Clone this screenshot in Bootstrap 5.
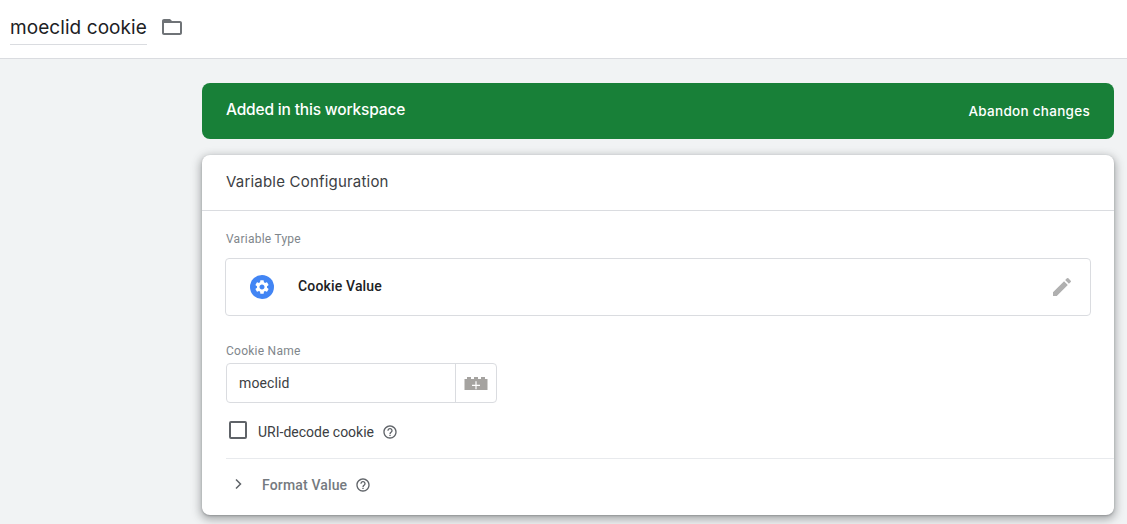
<!DOCTYPE html>
<html lang="en">
<head>
<meta charset="utf-8">
<title>moeclid cookie</title>
<link href="https://cdn.jsdelivr.net/npm/bootstrap@5.3.0/dist/css/bootstrap.min.css" rel="stylesheet">
<style>
html,body{height:524px;overflow:hidden}
body{background:#f1f3f4;font-family:Roboto,"Liberation Sans",sans-serif;color:#202124}
.top-bar{height:59px;background:#fff;border-bottom:1px solid #dadce0;padding-left:10px}
.var-title{font-family:Inter,sans-serif;font-size:19px;line-height:24px;letter-spacing:.07px;color:#202124;border-bottom:1px solid #dadce0;height:31px;padding-top:2px;margin-top:1px}
.folder-ico{margin-left:13px;margin-top:-5px}
.main-col{margin-left:202px;width:912px;padding-top:24px}
.status-bar{height:56px;background:#188038;border-radius:8px;color:#fff;padding:0 24px 2px;font-family:Inter,sans-serif}
.status-text{font-size:15.5px;font-weight:500;letter-spacing:-.17px}
.abandon{font-size:13.5px;font-weight:500;letter-spacing:.28px;margin-top:2px}
.cfg-card{margin-top:16px;height:360px;background:#fff;border-radius:8px;box-shadow:0 1px 2px rgba(60,64,67,.3),0 3px 8px 2px rgba(60,64,67,.38);overflow:hidden}
.cfg-head{height:56px;border-bottom:1px solid #dadce0;padding:0 24px;font-family:Inter,sans-serif;font-size:15px;letter-spacing:.2px;color:#3c4043}
.cfg-body{padding:20px 23px 0}
.fld-label{font-size:12px;line-height:16px;color:#80868b;letter-spacing:.25px;margin-left:1px}
.type-box{height:58px;margin-top:11px;border:1px solid #dadce0;border-radius:4px;padding:0 16px 0 24px}
.type-name{font-size:14px;font-weight:500;margin-left:24px;margin-bottom:2px;color:#202124;letter-spacing:.16px}
.name-label{margin-top:27px}
.input-wrap{margin:4px 0 0 1px;width:271px;height:40px;border:1px solid #dadce0;border-radius:4px}
.input-val{flex:1;padding:0 12px;font-size:14px;color:#3c4043;letter-spacing:.1px}
.input-btn{width:41px;border-left:1px solid #dadce0}
.check-row{margin:18px 0 0 4px;height:18px;font-size:14px;color:#3c4043}
.check-box{width:18px;height:18px;border:2px solid #5f6368;border-radius:2px;margin-right:11px}
.check-text{margin-top:1px}
.help-ico{margin-left:8px}
.check-row .help-ico{margin-top:3px}
.rule{height:1px;background:#e8eaed;margin-top:19px;margin-left:24px}
.fmt-row{height:53px;padding-left:32px;padding-bottom:1px;font-size:14px;font-weight:500;color:#757a80}
.fmt-chevron{margin-top:-2px}
.fmt-text{margin-left:18px;letter-spacing:.15px}
</style>
</head>
<body>
<header class="top-bar d-flex align-items-center">
  <div class="var-title">moeclid cookie</div>
  <svg class="folder-ico" width="24" height="24" viewBox="0 0 24 24" fill="#6f7377" aria-hidden="true"><path d="M20 6h-8l-2-2H4c-1.1 0-2 .9-2 2v12c0 1.1.9 2 2 2h16c1.1 0 2-.9 2-2V8c0-1.100-.9-2-2-2zm0 12H4V8h16v10z"/></svg>
</header>
<main class="main-col">
  <div class="status-bar d-flex align-items-center justify-content-between">
    <span class="status-text">Added in this workspace</span>
    <span class="abandon">Abandon changes</span>
  </div>
  <section class="cfg-card">
    <div class="cfg-head d-flex align-items-center">Variable Configuration</div>
    <div class="cfg-body">
      <div class="fld-label">Variable Type</div>
      <div class="type-box d-flex align-items-center">
        <svg width="24" height="24" viewBox="0 0 24 24" aria-hidden="true"><circle cx="12" cy="12" r="12" fill="#4285f4"/><path fill="#fff" transform="translate(3.600 3.600) scale(.7)" d="M19.140 12.940c.04-.3.060-.61.060-.94 0-.32-.020-.64-.070-.94l2.030-1.580a.49.49 0 0 0 .12-.61l-1.920-3.320a.488.488 0 0 0-.59-.22l-2.390.96c-.5-.38-1.030-.7-1.620-.94l-.36-2.540a.484.484 0 0 0-.48-.41h-3.840c-.24 0-.43.170-.47.410l-.36 2.540c-.59.240-1.130.570-1.620.94l-2.390-.96c-.22-.08-.47 0-.59.220L2.740 8.870c-.12.210-.08.470.12.610l2.030 1.580c-.05.3-.09.630-.09.940s.020.640.070.940l-2.030 1.580a.49.49 0 0 0-.12.610l1.920 3.320c.12.220.37.290.59.220l2.390-.96c.5.380 1.030.7 1.620.94l.36 2.540c.05.240.24.410.48.410h3.840c.24 0 .44-.17.470-.41l.36-2.540c.59-.24 1.130-.56 1.620-.94l2.390.96c.22.080.47 0 .59-.22l1.920-3.320c.12-.22.070-.47-.12-.61l-2.010-1.580zM12 15.600c-1.980 0-3.600-1.620-3.600-3.600s1.620-3.600 3.600-3.600 3.600 1.620 3.600 3.600-1.620 3.600-3.600 3.600z"/></svg>
        <span class="type-name flex-grow-1">Cookie Value</span>
        <svg width="24" height="24" viewBox="0 0 24 24" fill="#b0b0b0" aria-hidden="true"><path d="M3 17.250V21h3.750L17.810 9.940l-3.750-3.750L3 17.250zM20.710 7.040a1 1 0 0 0 0-1.410l-2.340-2.340a1 1 0 0 0-1.410 0l-1.830 1.830 3.750 3.750 1.830-1.830z"/></svg>
      </div>
      <div class="fld-label name-label">Cookie Name</div>
      <div class="input-wrap d-flex align-items-center">
        <div class="input-val">moeclid</div>
        <div class="input-btn h-100 d-flex align-items-center justify-content-center">
          <svg width="24" height="16" viewBox="0 0 24 16" aria-hidden="true"><path fill="#a5a3a0" d="M.5 4H3V2h4v2h3V2h4v2h3V2h4v2h2.500v11H.5z"/><path fill="#fff" d="M11.400 6.300h1.200v3.400H16v1.200h-3.400v3.400h-1.200v-3.400H8V9.700h3.400z"/></svg>
        </div>
      </div>
      <div class="check-row d-flex">
        <span class="check-box"></span>
        <span class="check-text">URI-decode cookie</span>
        <svg class="help-ico" width="16" height="16" viewBox="0 0 24 24" fill="#5f6368" aria-hidden="true"><path d="M11 18h2v-2h-2v2zm1-16C6.480 2 2 6.480 2 12s4.480 10 10 10 10-4.480 10-10S17.520 2 12 2zm0 18c-4.410 0-8-3.590-8-8s3.590-8 8-8 8 3.590 8 8-3.590 8-8 8zm0-14c-2.210 0-4 1.790-4 4h2c0-1.100.9-2 2-2s2 .9 2 2c0 2-3 1.750-3 5h2c0-2.250 3-2.500 3-5 0-2.210-1.790-4-4-4z"/></svg>
      </div>
    </div>
    <div class="rule"></div>
    <div class="fmt-row d-flex align-items-center">
      <svg class="fmt-chevron" width="10" height="12" viewBox="0 0 10 12" fill="none" stroke="#5f6368" stroke-width="1.500" aria-hidden="true"><path d="M2 1.500 6.500 6 2 10.500"/></svg>
      <span class="fmt-text">Format Value</span>
      <svg class="help-ico" width="16" height="16" viewBox="0 0 24 24" fill="#5f6368" aria-hidden="true"><path d="M11 18h2v-2h-2v2zm1-16C6.480 2 2 6.480 2 12s4.480 10 10 10 10-4.480 10-10S17.520 2 12 2zm0 18c-4.410 0-8-3.590-8-8s3.590-8 8-8 8 3.590 8 8-3.590 8-8 8zm0-14c-2.210 0-4 1.790-4 4h2c0-1.100.9-2 2-2s2 .9 2 2c0 2-3 1.750-3 5h2c0-2.250 3-2.500 3-5 0-2.210-1.790-4-4-4z"/></svg>
    </div>
  </section>
</main>
<script src="https://cdn.jsdelivr.net/npm/bootstrap@5.3.0/dist/js/bootstrap.bundle.min.js"></script>
</body>
</html>
